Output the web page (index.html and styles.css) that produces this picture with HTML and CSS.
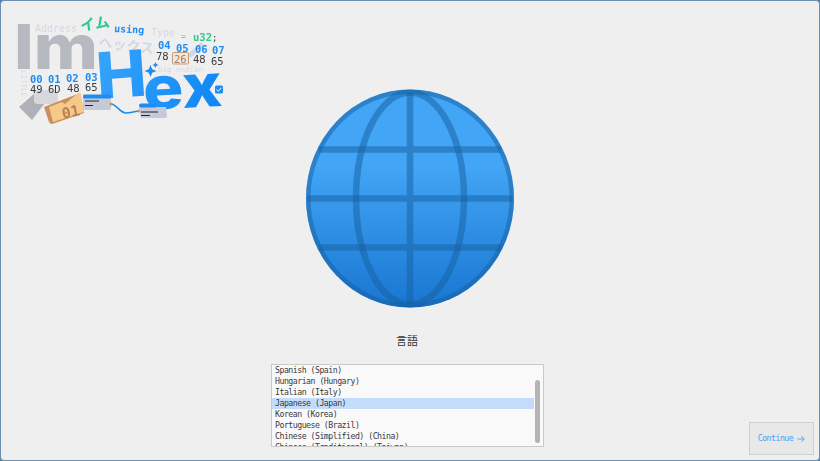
FILE: index.html
```html
<!DOCTYPE html>
<html lang="en">
<head>
<meta charset="utf-8">
<title>ImHex</title>
<link rel="stylesheet" href="styles.css">
</head>
<body>
<main class="window">
  <div class="logo-cell">
    <svg class="logo" width="230" height="130" viewBox="0 0 230 130">
      <defs>
        <linearGradient id="hexg" gradientUnits="userSpaceOnUse" x1="100" y1="50" x2="220" y2="112">
          <stop offset="0" stop-color="#38a4fb"/>
          <stop offset="1" stop-color="#0f86f5"/>
        </linearGradient>
      </defs>
      <path d="M19 107 L35 93 L45 103 L32 120Z" fill="#b0b1b8"/>
      <rect x="34" y="90" width="24" height="14" rx="4" fill="#d8d8dc"/>
      <text class="l-faint l-mono" x="35" y="32" font-size="10">Address</text>
      <text class="l-green l-jp" x="81" y="31" font-size="15" font-weight="700" transform="rotate(-8 81 31)">イム</text>
      <text class="l-blue l-mono l-bold" x="114" y="32" font-size="10" transform="rotate(3 114 32)">using</text>
      <text class="l-faint l-mono" x="151" y="35" font-size="10" transform="rotate(3 151 35)">Type</text>
      <text class="l-gray l-mono" x="181" y="39" font-size="8">=</text>
      <text class="l-green l-mono l-bold" x="193" y="41" font-size="10.500">u32</text>
      <text class="l-dark l-mono" x="212" y="41" font-size="9">;</text>
      <text class="l-faint l-jp" x="98" y="47" font-size="14" font-weight="700" transform="rotate(7 98 47)">ヘックス</text>
      <text class="l-im" x="14" y="69" font-size="62" textLength="84" lengthAdjust="spacingAndGlyphs">Im</text>
      <text class="l-faint l-mono" x="20.500" y="70" font-size="7.500" transform="rotate(90 20.500 70)">LITTLE</text>
      <path d="M187 55 L201 42 L204 45 L191 58Z" class="l-faintfill"/>
      <rect x="172.500" y="52.500" width="16" height="11.500" rx="1" class="l-tanbox"/>
      <g class="l-mono l-bold l-blue" font-size="10.500">
        <text x="158" y="49">04</text><text x="176" y="52">05</text><text x="195" y="53">06</text><text x="212" y="54">07</text>
        <text x="30" y="83">00</text><text x="48" y="83">01</text><text x="66" y="82">02</text><text x="85" y="81">03</text>
      </g>
      <g class="l-mono l-dark" font-size="10.500">
        <text x="156" y="60">78</text><text x="174" y="63" class="l-tan">26</text><text x="193" y="63">48</text><text x="211" y="65">65</text>
        <text x="30" y="93">49</text><text x="48" y="93">6D</text><text x="67" y="92">48</text><text x="85" y="91">65</text>
      </g>
      <text class="l-faint l-mono" x="158" y="72" font-size="7.500">big endian</text>
      <path d="M150.500 65 l1.700 4.300 4.300 1.700 -4.300 1.700 -1.700 4.300 -1.700 -4.300 -4.300 -1.700 4.300 -1.700Z M155.500 62 l.900 2.100 2.100 .900 -2.100 .900 -.900 2.100 -.900 -2.100 -2.100 -.900 2.100 -.900Z" fill="#1e8cf0"/>
      <text class="l-hex" x="98" y="99" font-size="64" textLength="50" lengthAdjust="spacingAndGlyphs" transform="rotate(-4 98 99)">H</text>
      <text class="l-hex" x="144" y="110" font-size="60" textLength="79" lengthAdjust="spacingAndGlyphs" transform="rotate(-3 144 110)">ex</text>
      <rect x="215" y="85.500" width="8" height="8" rx="1.500" fill="#1e8cf0"/>
      <path d="M216.500 89.500 l1.800 1.800 3 -3.500" stroke="#fff" stroke-width="1" fill="none"/>
      <path d="M44 107 L80 93 L84 113 L52 124 Q50 124 49 122Z" fill="#c98f5c"/>
      <path d="M49 107 L62 102 L65 104 L78 93 Q81 92 81 95 L84 112 L53 122Z" fill="#f6c98a"/>
      <text class="l-brown l-mono l-bold" x="63" y="119" font-size="15" transform="rotate(-12 63 119)">01</text>
      <path d="M83 97 L111 96 L111 108 Q111 110 109 110 L85 110 Q83 110 83 108Z" fill="#c6cad8"/>
      <rect x="83" y="94.500" width="28" height="4" rx="1.500" fill="#1e8cf0"/>
      <path d="M85 101 H99 M85 105.500 H93" stroke="#222" stroke-width="1"/>
      <path d="M112 104 C118 106 120 113 126 113 C131 113 135 111 139 111" stroke="#1e8cf0" stroke-width="1.500" fill="none"/>
      <circle cx="111" cy="104" r="1.500" fill="#c98f5c"/><circle cx="139" cy="111" r="1.500" fill="#c98f5c"/>
      <path d="M139 107 H166 L167 116 Q167 118 165 118 L141 118Z" fill="#c6cad8"/>
      <rect x="139" y="103.500" width="18" height="4" rx="2" fill="#1e8cf0"/>
      <path d="M141 112 H158 M141 115.500 H150" stroke="#222" stroke-width="1"/>
    </svg>
  </div>
  <section class="center">
    <svg class="globe" width="210" height="220" viewBox="0 0 210 220">
      <defs>
        <linearGradient id="globeg" x1="0" y1="0" x2="0" y2="1">
          <stop offset="0" stop-color="#42a5f5"/>
          <stop offset="0.35" stop-color="#42a5f5"/>
          <stop offset="1" stop-color="#1976d2"/>
        </linearGradient>
        <clipPath id="globec"><ellipse cx="105" cy="109.500" rx="104" ry="109"/></clipPath>
      </defs>
      <ellipse cx="105" cy="109.500" rx="104" ry="109" fill="url(#globeg)"/>
      <g clip-path="url(#globec)" fill="none" stroke="#15609f" stroke-opacity="0.5" stroke-width="6.500">
        <ellipse cx="105" cy="109.500" rx="102" ry="107" stroke-width="5"/>
        <ellipse cx="105" cy="109.500" rx="54" ry="106"/>
        <path d="M105 4 V215 M3 109.500 H207 M14 60.500 H196 M14 158.500 H196"/>
      </g>
    </svg>
    <h1 class="title">言語</h1>
    <div class="listbox">
      <ul class="items">
        <li>Spanish (Spain)</li>
        <li>Hungarian (Hungary)</li>
        <li>Italian (Italy)</li>
        <li class="selected">Japanese (Japan)</li>
        <li>Korean (Korea)</li>
        <li>Portuguese (Brazil)</li>
        <li>Chinese (Simplified) (China)</li>
        <li>Chinese (Traditional) (Taiwan)</li>
      </ul>
      <div class="track"><div class="thumb"></div></div>
    </div>
  </section>
  <div class="action-cell">
    <button class="continue" type="button">Continue
      <svg width="8" height="8" viewBox="0 0 8 8"><path d="M0.500 4 H7 M4.200 1 L7.200 4 L4.200 7" fill="none" stroke="currentColor" stroke-width="0.900"/></svg>
    </button>
  </div>
</main>
</body>
</html>
```

FILE: styles.css
```css
* { box-sizing: border-box; }
html, body { margin: 0; height: 100%; background: #4f7ea6; }
.window {
  height: 461px;
  width: 820px;
  display: grid;
  grid-template-columns: 270px 278px 1fr;
  background: #efefef;
  border: 1px solid #6a8fb0;
  border-radius: 4px;
  overflow: hidden;
}
.logo-cell { margin: -1px 0 0 -1px; }
.logo { display: block; filter: blur(0.35px); }
.l-mono { font-family: "DejaVu Sans Mono", "Liberation Mono", monospace; }
.l-jp { font-family: "Noto Sans CJK JP", sans-serif; }
.l-bold { font-weight: 700; }
.l-faint { fill: #d5d8e3; }
.l-faintfill { fill: #d3d7e2; }
.l-green { fill: #2fc98f; }
.l-blue { fill: #1d8cf5; }
.l-gray { fill: #9a9ba3; }
.l-dark { fill: #3a3a40; }
.l-tan { fill: #a9805f; }
.l-tanbox { fill: #f3dcc4; fill-opacity: .45; stroke: #c49a78; stroke-width: 1; }
.l-brown { fill: #b9824f; }
.l-im { font-family: Inter, "DejaVu Sans", sans-serif; font-weight: 800; fill: #b7b9c1; }
.l-hex { font-family: Inter, "DejaVu Sans", sans-serif; font-weight: 800; fill: url(#hexg); }
.center { display: flex; flex-direction: column; align-items: center; padding-top: 88px; }
.globe { display: block; filter: blur(0.4px); }
.title {
  margin: 23px 0 0 -6px;
  font: 400 11px/16px "Noto Sans CJK JP", sans-serif;
  color: #333333;
}
.listbox {
  margin-top: 16px;
  align-self: flex-start;
  width: 273px;
  height: 83px;
  display: flex;
  border: 1px solid #c9c9c9;
  background: #f9f9f9;
  overflow: hidden;
}
.items { list-style: none; margin: 0; padding: 0; flex: 1; min-width: 0; }
.items li {
  height: 11px;
  padding-left: 3px;
  font: 8.200px/11px "DejaVu Sans Mono", monospace;
  letter-spacing: -0.490px;
  color: #3a3a3a;
  white-space: nowrap;
}
.items li.selected { background: #c3dcfa; }
.track { width: 9px; padding-top: 15px; padding-left: 1px; }
.thumb { width: 5px; height: 63px; border-radius: 3px; background: #b4b4b4; }
.action-cell { display: flex; justify-content: flex-end; align-items: flex-end; padding: 0 5px 5px 0; }
.continue {
  width: 65px;
  height: 33px;
  padding: 0;
  display: flex;
  align-items: center;
  justify-content: center;
  gap: 4px;
  background: #e8e8e8;
  border: 1px solid #cfcfcf;
  color: #4ba0f0;
  font: 8.200px/11px "DejaVu Sans Mono", monospace;
  letter-spacing: -0.490px;
}
```
